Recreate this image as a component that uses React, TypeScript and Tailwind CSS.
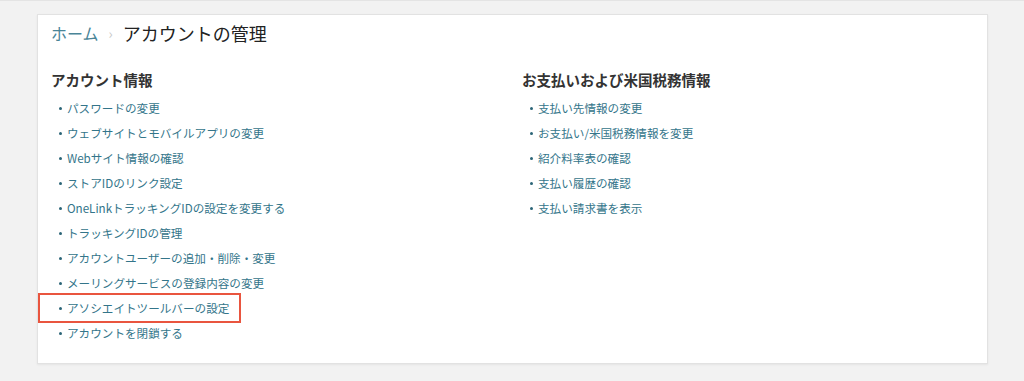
import React from 'react';

const accountLinks = [
  'パスワードの変更',
  'ウェブサイトとモバイルアプリの変更',
  'Webサイト情報の確認',
  'ストアIDのリンク設定',
  'OneLinkトラッキングIDの設定を変更する',
  'トラッキングIDの管理',
  'アカウントユーザーの追加・削除・変更',
  'メーリングサービスの登録内容の変更',
  'アソシエイトツールバーの設定',
  'アカウントを閉鎖する',
];

const paymentLinks = [
  '支払い先情報の変更',
  'お支払い/米国税務情報を変更',
  '紹介料率表の確認',
  '支払い履歴の確認',
  '支払い請求書を表示',
];

function LinkItem({ label, marked }: { label: string; marked?: boolean }) {
  return (
    <li className="relative flex items-center h-[25px]">
      <span className="ml-[8px] mr-[5px] w-[3px] h-[3px] rounded-full bg-[#2b6577]" />
      <a href="#" className="text-[11.6px] text-[#33758a] leading-[25px]">
        {label}
      </a>
      {marked && (
        <span className="absolute left-[-13px] top-[-3px] w-[203px] h-[30px] border-2 border-[#e9553f] pointer-events-none" />
      )}
    </li>
  );
}

export default function App() {
  return (
    <div
      className="min-h-[381px] bg-[#f2f2f2] border-t border-[#e4e4e4] pt-[13px] px-[36px] pb-[17px]"
      style={{ fontFamily: '"Noto Sans CJK JP", "Noto Sans", sans-serif' }}
    >
      <div className="bg-white border border-[#e2e2e2] shadow-[0_1px_2px_rgba(0,0,0,0.06)] ml-[1px] pt-[5px] pb-[17px] pl-[13px]">
        {/* Breadcrumb */}
        <div className="flex items-center h-[26px]">
          <a href="#" className="text-[16px] text-[#4a8598]">ホーム</a>
          <span className="mx-[10px] text-[14px] text-[#c8c8c8]">›</span>
          <span className="text-[18px] text-[#222]">アカウントの管理</span>
        </div>

        <div className="grid grid-cols-[471px_1fr] mt-[24px]">
          <section>
            <h2 className="text-[14.5px] font-bold text-[#333] leading-[20px]">アカウント情報</h2>
            <ul className="mt-[6px]">
              {accountLinks.map((l) => (
                <LinkItem key={l} label={l} marked={l === 'アソシエイトツールバーの設定'} />
              ))}
            </ul>
          </section>
          <section>
            <h2 className="text-[14.5px] font-bold text-[#333] leading-[20px]">お支払いおよび米国税務情報</h2>
            <ul className="mt-[6px]">
              {paymentLinks.map((l) => (
                <LinkItem key={l} label={l} />
              ))}
            </ul>
          </section>
        </div>
      </div>
    </div>
  );
}
